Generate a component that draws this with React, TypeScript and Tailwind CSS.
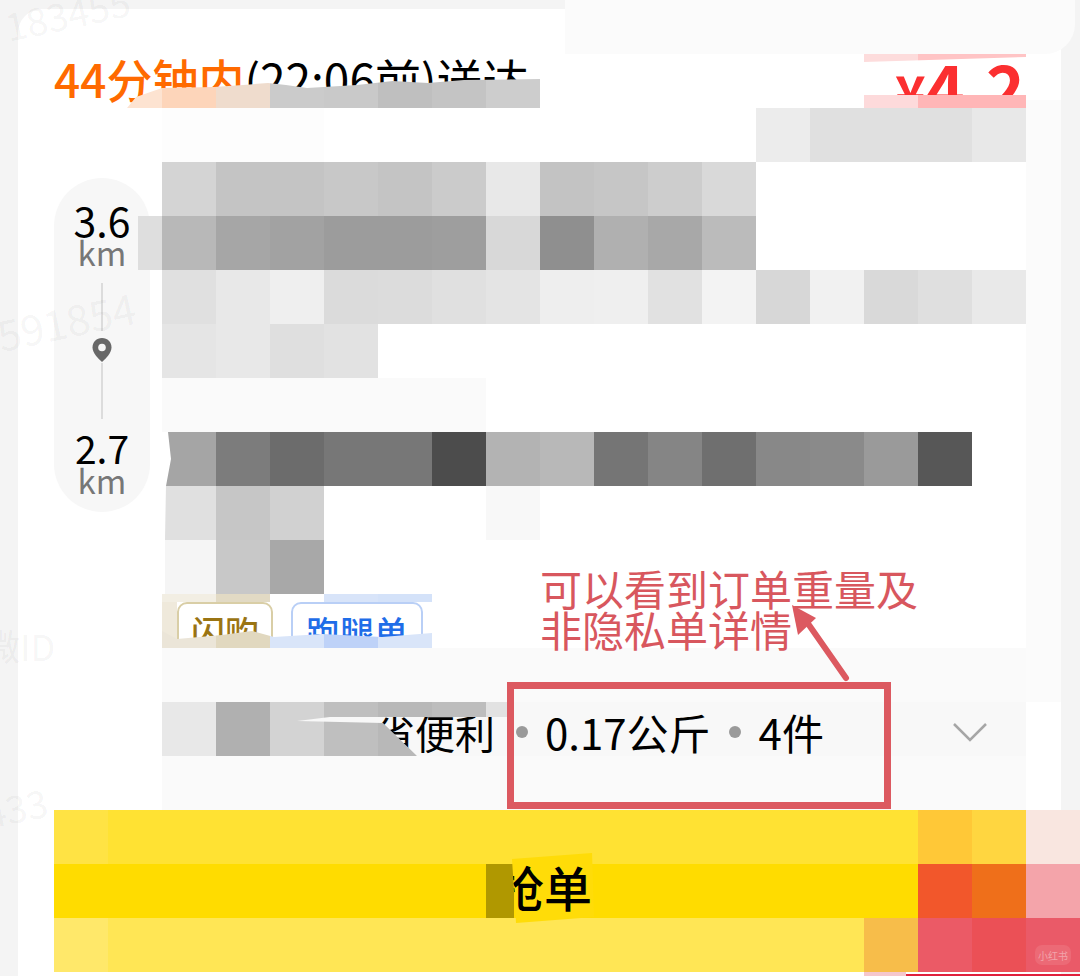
const cell = "h-full shrink-0";

function Row({ cells, className = "" }: { cells: string[]; className?: string }) {
  return (
    <div className={`flex h-[54px] w-[864px] ${className}`}>
      {cells.map((c, i) => (
        <div key={i} className={`${cell} w-[54px] ${c}`} />
      ))}
    </div>
  );
}

function Title() {
  return (
    <div className="relative flex h-[54px] w-[972px] justify-between overflow-hidden leading-[54px]">
      <div className="-mt-[3px] whitespace-nowrap text-[46px] text-black">
        <span className="font-medium text-[#ff6a00]">44分钟内</span>(22:06前)送达
      </div>
      <div className="-mt-[4px] flex items-baseline whitespace-nowrap pr-[1px] font-bold leading-[70px] text-[#fb2f30]">
        <span className="text-[52px]">¥</span>
        <span className="text-[66px]">4.2</span>
      </div>
      <div className="absolute bottom-0 left-[64px] flex h-[29px] [clip-path:polygon(9px_29px,18px_18px,44px_9px,96px_8px,125px_6px,150px_4px,168px_6px,189px_9px,239px_6px,275px_2px,310px_4px,346px_1px,422px_0,422px_29px)]">
        <div className="h-full w-[44px] bg-[#fde3d1]" />
        <div className="h-full w-[54px] bg-[#fdd5ba]" />
        <div className="h-full w-[54px] bg-[#efdccd]" />
        <div className="h-full w-[54px] bg-[#cbcbcb]" />
        <div className="h-full w-[54px] bg-[#c9c9c9]" />
        <div className="h-full w-[54px] bg-[#bfbfbf]" />
        <div className="h-full w-[54px] bg-[#c4c4c4]" />
        <div className="h-full w-[54px] bg-[#cdcdcd]" />
      </div>
      <div className="absolute right-0 top-0 flex h-[8px] w-[162px] [clip-path:polygon(0_0,100%_0,100%_3px,0_8px)]">
        <div className="h-full w-[54px] bg-[#fddcdc]" />
        <div className="h-full w-[108px] bg-[#ffc4c5]" />
      </div>
      <div className="absolute bottom-0 right-0 flex h-[13px] w-[162px]">
        <div className="h-full w-[54px] bg-[#fddadb]" />
        <div className="h-full w-[108px] bg-[#ffb6b7]" />
      </div>
    </div>
  );
}

function Pin() {
  return (
    <svg width="20" height="24" viewBox="0 0 20 24" className="mt-[7px]">
      <path d="M10 0C4.5 0 0.5 4 0.5 9.5 0.5 15 6 20.5 10 24c4-3.5 9.5-9 9.5-14.5C19.5 4 15.5 0 10 0z" fill="#686868" />
      <circle cx="10" cy="9.5" r="3.8" fill="#f6f6f6" />
    </svg>
  );
}

function DistancePill() {
  return (
    <div className="mt-[70px] flex h-[334px] w-[96px] shrink-0 flex-col items-center rounded-[48px] bg-[#f7f7f7] pt-[24px]">
      <div className="-mt-[2px] text-[41px] leading-[38px] text-black">3.6</div>
      <div className="-mt-[1px] text-[33px] leading-[30px] text-[#777777]">km</div>
      <div className="mt-[16px] h-[48px] w-[2px] bg-[#dcdcdc]" />
      <Pin />
      <div className="mt-[1px] h-[56px] w-[2px] bg-[#dcdcdc]" />
      <div className="mt-[9px] text-[39px] leading-[38px] text-black">2.7</div>
      <div className="text-[33px] leading-[28px] text-[#777777]">km</div>
    </div>
  );
}

function Tags() {
  return (
    <div className="relative flex h-[54px] w-[864px] items-start gap-[18px] overflow-hidden pl-[15px] pt-[8px]">
      <div className="absolute left-0 top-0 h-full w-[15px] bg-[#efe9db]" />
      <div className="absolute left-0 top-0 flex h-[8px]">
        <div className="h-full w-[54px] bg-[#f2eee3]" />
        <div className="h-full w-[54px] bg-[#e2dac4]" />
        <div className="h-full w-[54px] bg-white" />
        <div className="h-full w-[54px] bg-[#d8e4f9]" />
        <div className="h-full w-[54px] bg-[#d4e2f9]" />
      </div>
      <div className="flex h-[58px] w-[96px] shrink-0 items-center justify-center rounded-[10px] border-[2px] border-[#d9cea6] bg-white text-[34px] font-medium text-[#9a7413]">
        闪购
      </div>
      <div className="flex h-[58px] w-[132px] shrink-0 items-center justify-center rounded-[10px] border-[2px] border-[#b9cff6] bg-white text-[34px] font-medium text-[#1f6de8]">
        跑腿单
      </div>
      <div className="absolute bottom-0 left-0 flex h-[17px] [clip-path:polygon(0_0,15px_8px,60px_4px,90px_0,112px_6px,160px_3px,220px_6px,270px_2px,270px_17px,0_17px)]">
        <div className="h-full w-[54px] bg-[#ebe5d8]" />
        <div className="h-full w-[54px] bg-[#e1d8bf]" />
        <div className="h-full w-[54px] bg-[#d9e5f9]" />
        <div className="h-full w-[54px] bg-[#bed2f8]" />
        <div className="h-full w-[54px] bg-[#d9e5f9]" />
      </div>
    </div>
  );
}

function Dot() {
  return <span className="block h-[12px] w-[12px] shrink-0 rounded-full bg-[#9a9a9a]" />;
}

function Summary() {
  return (
    <div className="relative flex h-[54px] w-[864px] items-center whitespace-nowrap bg-[#f8f8f8] pl-[213px] pt-[6px] text-[40px] leading-[48px] text-black">
      <span>省便利</span>
      <span className="ml-[21px]"><Dot /></span>
      <span className="ml-[17px] text-[42px]">0.17公斤</span>
      <span className="ml-[18px]"><Dot /></span>
      <span className="ml-[18px] text-[42px]">4件</span>
      <svg width="36" height="20" viewBox="0 0 36 20" className="ml-[128px]">
        <path d="M2 2l16 16L34 2" fill="none" stroke="#a6a6a6" strokeWidth="2.5" />
      </svg>
      <div className="absolute left-0 top-0 flex h-[54px] [clip-path:polygon(0_0,348px_0,348px_15px,168px_15px,135px_19px,221px_21px,255px_54px,0_54px)]">
        <div className="h-full w-[54px] bg-[#e8e8e8]" />
        <div className="h-full w-[54px] bg-[#b0b0b0]" />
        <div className="h-full w-[54px] bg-[#d3d3d3]" />
        <div className="h-full w-[54px] bg-[#bfbfbf]" />
        <div className="h-full w-[54px] bg-[#b8b8b8]" />
        <div className="h-full w-[54px] bg-[#bdbdbd]" />
        <div className="h-full w-[24px] bg-[#e2e2e2]" />
      </div>
    </div>
  );
}

function Details() {
  return (
    <div className="ml-[12px] flex w-[864px] shrink-0 flex-col">
      <Row
        cells={["bg-[#fdfdfd]", "bg-[#fdfdfd]", "bg-[#fdfdfd]", "bg-white", "bg-white", "bg-white", "bg-white", "bg-white", "bg-white", "bg-white", "bg-white", "bg-[#ececec]", "bg-[#e0e0e0]", "bg-[#e0e0e0]", "bg-[#e0e0e0]", "bg-[#e8e8e8]"]}
      />
      <Row
        cells={["bg-[#d4d4d4]", "bg-[#c4c4c4]", "bg-[#c4c4c4]", "bg-[#c8c8c8]", "bg-[#c4c4c4]", "bg-[#cbcbcb]", "bg-[#e8e8e8]", "bg-[#c3c3c3]", "bg-[#c6c6c6]", "bg-[#cdcdcd]", "bg-[#d9d9d9]"]}
      />
      <div className="flex">
        <div className="-ml-[24px] h-[54px] w-[24px] shrink-0 bg-[#dedede]" />
        <Row
          cells={["bg-[#b8b8b8]", "bg-[#a6a6a6]", "bg-[#a2a2a2]", "bg-[#9c9c9c]", "bg-[#9c9c9c]", "bg-[#9e9e9e]", "bg-[#d8d8d8]", "bg-[#8f8f8f]", "bg-[#b0b0b0]", "bg-[#a8a8a8]", "bg-[#bbbbbb]"]}
        />
      </div>
      <Row
        cells={["bg-[#e0e0e0]", "bg-[#e8e8e8]", "bg-[#efefef]", "bg-[#dbdbdb]", "bg-[#dcdcdc]", "bg-[#e0e0e0]", "bg-[#e4e4e4]", "bg-[#eeeeee]", "bg-[#efefef]", "bg-[#e1e1e1]", "bg-[#f3f3f3]", "bg-[#d7d7d7]", "bg-[#f1f1f1]", "bg-[#d9d9d9]", "bg-[#dfdfdf]", "bg-[#e9e9e9]"]}
      />
      <Row cells={["bg-[#e5e5e5]", "bg-[#e8e8e8]", "bg-[#dfdfdf]", "bg-[#e2e2e2]"]} />
      <Row cells={["bg-[#fafafa]", "bg-[#fafafa]", "bg-[#fafafa]", "bg-[#fafafa]", "bg-[#fafafa]", "bg-[#fafafa]"]} />
      <Row
        cells={["bg-[#a5a5a5] [clip-path:polygon(6px_0,100%_0,100%_100%,4px_100%,9px_50%)]", "bg-[#7c7c7c]", "bg-[#6c6c6c]", "bg-[#777777]", "bg-[#777777]", "bg-[#4c4c4c]", "bg-[#b3b3b3]", "bg-[#b8b8b8]", "bg-[#757575]", "bg-[#858585]", "bg-[#6f6f6f]", "bg-[#888888]", "bg-[#8a8a8a]", "bg-[#9a9a9a]", "bg-[#575757]"]}
      />
      <Row cells={["bg-[#e0e0e0] [clip-path:polygon(4px_0,100%_0,100%_100%,3px_100%)]", "bg-[#c6c6c6]", "bg-[#d1d1d1]", "bg-white", "bg-white", "bg-white", "bg-[#f8f8f8]"]} />
      <Row cells={["bg-[#f5f5f5] [clip-path:polygon(3px_0,100%_0,100%_100%,3px_100%)]", "bg-[#c8c8c8]", "bg-[#a8a8a8]"]} />
      <Tags />
      <div className="h-[54px] w-[864px] bg-[#fafafa]" />
      <Summary />
      <div className="h-[54px] w-[864px] bg-[#fafafa]" />
    </div>
  );
}

function GrabButton() {
  return (
    <div className="relative flex w-[1026px] flex-col">
      <div className="flex h-[54px]">
        <div className="h-full w-[54px] bg-[#ffe344]" />
        <div className="h-full w-[810px] bg-[#ffe233]" />
        <div className="h-full w-[54px] bg-[#ffc837]" />
        <div className="h-full w-[54px] bg-[#ffd640]" />
        <div className="h-full w-[54px] bg-[#f9e6e0]" />
      </div>
      <div className="flex h-[54px]">
        <div className="h-full w-[432px] bg-[#ffdc00]" />
        <div className="h-full w-[28px] bg-[#b09800]" />
        <div className="h-full w-[404px] bg-[#ffdc00]" />
        <div className="h-full w-[54px] bg-[#f2572b]" />
        <div className="h-full w-[54px] bg-[#ef6f1a]" />
        <div className="h-full w-[54px] bg-[#f4a4aa]" />
      </div>
      <div className="flex h-[54px]">
        <div className="h-full w-[54px] bg-[#ffe86a]" />
        <div className="h-full w-[756px] bg-[#ffe655]" />
        <div className="h-full w-[54px] bg-[#f7bd4a]" />
        <div className="h-full w-[54px] bg-[#eb5a66]" />
        <div className="h-full w-[54px] bg-[#eb5056]" />
        <div className="h-full w-[54px] bg-[#ea5a68]" />
      </div>
      <div className="absolute left-[458px] top-[43px] flex h-[70px] w-[82px] items-center justify-end overflow-hidden bg-[#ffdc08] text-[48px] font-medium leading-[70px] text-black [clip-path:polygon(0_6px,80px_0,82px_64px,4px_70px)]">
        <span className="-mt-[4px] whitespace-nowrap pr-[2px]">抢单</span>
      </div>
      <div className="absolute left-[981px] top-[135px] flex h-[20px] w-[36px] items-center justify-center rounded-[7px] bg-[#ec6a76] text-[10px] text-[#f2a4ab]">
        小红书
      </div>
    </div>
  );
}

function Annotation() {
  return (
    <>
      <div className="absolute left-[540px] top-[567px] text-[42px] leading-[41px] text-[#d8575e]">
        <div>可以看到订单重量及</div>
        <div>非隐私单详情</div>
      </div>
      <div className="absolute left-[507px] top-[682px] h-[127px] w-[384px] border-[7px] border-[#dc5960]" />
      <svg width="70" height="90" viewBox="0 0 70 90" className="absolute left-[785px] top-[598px]">
        <path d="M61 80L24 27" fill="none" stroke="#dc5960" strokeWidth="6" strokeLinecap="round" />
        <path d="M7 7L31 20L13 37z" fill="#dc5960" />
      </svg>
    </>
  );
}

function Watermarks() {
  return (
    <div className="text-black/[0.05]">
      <div className="absolute left-[4px] top-[-16px] -rotate-12 text-[38px]">183455</div>
      <div className="absolute left-[-4px] top-[288px] -rotate-12 text-[42px]">591854</div>
      <div className="absolute left-[-16px] top-[618px] text-[36px]">微ID</div>
      <div className="absolute left-[-16px] top-[778px] -rotate-12 text-[38px]">433</div>
    </div>
  );
}

export default function App() {
  return (
    <div className="relative h-[976px] w-[1080px] overflow-hidden bg-[#f4f4f4] font-['Noto_Sans_CJK_SC','Noto_Sans',sans-serif]">
      <div className="relative ml-[18px] mt-[9px] h-[967px] w-[1043px] rounded-tl-[24px] bg-white pl-[36px]">
        <div className="h-[45px]" />
        <Title />
        <div className="flex h-[702px]">
          <DistancePill />
          <Details />
        </div>
        <GrabButton />
        <div className="ml-[810px] flex h-[4px] w-[216px] items-end">
          <div className="h-full w-[42px] bg-[#f5c7cd]" />
          <div className="h-[2px] w-[174px] bg-[#e0203c]" />
        </div>
      </div>
      <div className="absolute right-[5px] top-0 h-[54px] w-[510px] rounded-br-[30px] bg-[#fbfbfb]" />
      <div className="absolute left-[1026px] top-[100px] h-[602px] w-[35px] bg-[#fbfbfb]" />
      <Watermarks />
      <Annotation />
    </div>
  );
}
